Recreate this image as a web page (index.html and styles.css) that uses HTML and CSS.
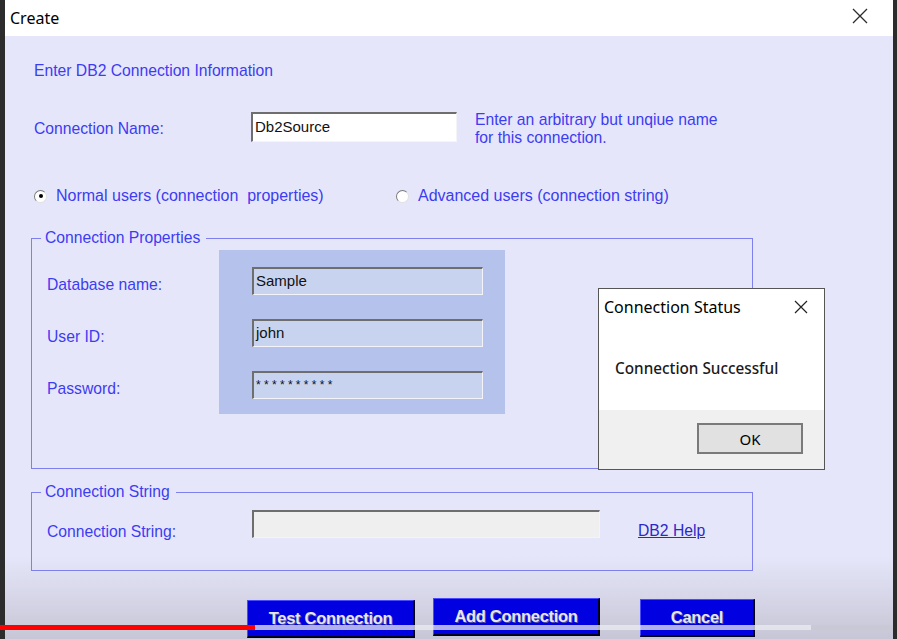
FILE: index.html
```html
<!DOCTYPE html>
<html lang="en">
<head>
    <meta charset="UTF-8">
    <title>Create</title>
    <link rel="stylesheet" href="styles.css">
</head>
<body>
    <div class="screen">
        <div class="window">
            <div class="titlebar">
                <span class="title">Create</span>
                <svg class="close" width="16" height="16" viewBox="0 0 16 16">
                    <path d="M1 1 L15 15 M15 1 L1 15" stroke="#2b2b2b" stroke-width="1.3" fill="none"/>
                </svg>
            </div>

            <div class="content">
                <p class="heading">Enter DB2 Connection Information</p>

                <div class="name-row">
                    <span class="name-label">Connection Name:</span>
                    <div class="field field-white">Db2Source</div>
                    <p class="hint">Enter an arbitrary but unqiue name<br>for this connection.</p>
                </div>

                <div class="radios">
                    <label class="radio radio-first"><span class="dot checked"></span>Normal users (connection&nbsp; properties)</label>
                    <label class="radio"><span class="dot"></span>Advanced users (connection string)</label>
                </div>

                <fieldset class="group group-props">
                    <legend>Connection Properties</legend>
                    <div class="props">
                        <div class="prop-labels">
                            <span>Database name:</span>
                            <span>User ID:</span>
                            <span>Password:</span>
                        </div>
                        <div class="prop-panel">
                            <div class="field field-blue">Sample</div>
                            <div class="field field-blue">john</div>
                            <div class="field field-blue field-pass">**********</div>
                        </div>
                    </div>
                </fieldset>

                <fieldset class="group group-string">
                    <legend>Connection String</legend>
                    <div class="string-row">
                        <span class="string-label">Connection String:</span>
                        <div class="field field-gray"></div>
                        <a class="help" href="#">DB2 Help</a>
                    </div>
                </fieldset>

                <div class="actions">
                    <button class="btn btn-test">Test Connection</button>
                    <button class="btn btn-add">Add Connection</button>
                    <button class="btn btn-cancel">Cancel</button>
                </div>
            </div>
        </div>

        <!-- message box sitting over the form -->
        <div class="msgbox">
            <div class="msg-main">
                <div class="msg-head">
                    <span class="msg-title">Connection Status</span>
                    <svg class="msg-close" width="14" height="14" viewBox="0 0 14 14">
                        <path d="M1 1 L13 13 M13 1 L1 13" stroke="#222" stroke-width="1.2" fill="none"/>
                    </svg>
                </div>
                <p class="msg-text">Connection Successful</p>
            </div>
            <div class="msg-foot">
                <button class="ok-btn">OK</button>
            </div>
        </div>

        <!-- video progress bar -->
        <div class="progress">
            <span class="played"></span>
            <span class="loaded"></span>
            <span class="rest"></span>
        </div>
    </div>
</body>
</html>
```

FILE: styles.css
```css
body {
    margin: 0;
    padding: 0;
    background: #2a2a2a;
}

.screen {
    position: relative;
    width: 897px;
    height: 639px;
    overflow: hidden;
    background: #2c2c2c;
    display: flex;
}

.window {
    margin-left: 5px;
    width: 888px;
    height: 639px;
    display: flex;
    flex-direction: column;
}

.titlebar {
    height: 36px;
    flex-shrink: 0;
    background: #fff;
    display: flex;
    align-items: center;
    justify-content: space-between;
    padding: 0 25px 0 5px;
}

.title {
    font-family: "Noto Sans", sans-serif;
    font-size: 16px;
    color: #000;
}

.close {
    margin-top: -4px;
}

.content {
    flex: 1;
    padding-left: 26px;
    background: linear-gradient(to bottom, #e6e6fa 0, #e6e6fa 520px, #c6c6d6 100%);
    font-family: "Liberation Sans", Arial, sans-serif;
    font-size: 15.7px;
    color: #3c3cf2;
}

.heading {
    margin: 26px 0 0 3px;
    line-height: 18px;
}

/* connection name */
.name-row {
    display: flex;
    align-items: flex-start;
    margin-top: 32px;
}

.name-label {
    width: 217px;
    margin-left: 3px;
    padding-top: 8px;
    line-height: 18px;
}

.field {
    box-sizing: border-box;
    border-top: 2px solid #6e6e6e;
    border-left: 2px solid #6e6e6e;
    border-right: 1px solid #f4f4f8;
    border-bottom: 1px solid #f4f4f8;
    font-family: "Liberation Sans", Arial, sans-serif;
    font-size: 15px;
    color: #111;
    padding: 3px 0 0 2px;
}

.field-white {
    width: 206px;
    height: 30px;
    background: #fff;
    padding-top: 4px;
}

.hint {
    margin: -1px 0 0 18px;
    line-height: 18px;
}

/* radios */
.radios {
    display: flex;
    margin-top: 40px;
    line-height: 18px;
    font-size: 16px;
}

.radio {
    display: flex;
    align-items: center;
}

.radio-first {
    width: 362px;
    margin-left: 3px;
}

.dot {
    box-sizing: border-box;
    width: 13px;
    height: 13px;
    border-radius: 50%;
    border: 1px solid;
    border-color: #7a7a7a #e0e0e0 #e0e0e0 #7a7a7a;
    background: #fff;
    margin-right: 9px;
    display: flex;
    align-items: center;
    justify-content: center;
}

.dot.checked::after {
    content: "";
    width: 4px;
    height: 4px;
    border-radius: 50%;
    background: #000;
}

/* group boxes */
.group {
    box-sizing: border-box;
    width: 722px;
    margin: 0;
    border: 1px solid #7f7ff0;
    padding: 0 0 0 9px;
}

.group legend {
    padding: 0 6px 0 4px;
    line-height: 18px;
}

.group-props {
    margin-top: 24px;
    padding-top: 3px;
    padding-bottom: 54px;
}

.props {
    display: flex;
}

.prop-labels {
    width: 172px;
    padding: 21px 0 0 6px;
    display: flex;
    flex-direction: column;
    gap: 24px;
}

.prop-labels span {
    height: 28px;
    display: flex;
    align-items: center;
}

.prop-panel {
    width: 286px;
    box-sizing: border-box;
    background: #b5c2eb;
    padding: 17px 0 15px 33px;
    display: flex;
    flex-direction: column;
    gap: 24px;
}

.field-blue {
    width: 231px;
    height: 28px;
    background: #c8d4ef;
}

.field-pass {
    font-size: 12px;
    padding-top: 5px;
    letter-spacing: 3.3px;
}

.group-string {
    margin-top: 14px;
    padding-top: 9px;
    padding-bottom: 29px;
}

.string-row {
    display: flex;
    align-items: flex-start;
}

.string-label {
    width: 205px;
    padding: 13px 0 0 6px;
    line-height: 18px;
}

.field-gray {
    width: 348px;
    height: 28px;
    background: #efefef;
}

.help {
    margin: 12px 0 0 38px;
    line-height: 18px;
    color: #2a2ac8;
    text-decoration: underline;
}

/* buttons */
.actions {
    display: flex;
    align-items: flex-start;
    margin: 27px 0 0 216px;
}

.btn {
    box-sizing: border-box;
    height: 38px;
    background: #0000e0;
    border: 1px solid #4a4aff;
    border-right: 2px solid #000018;
    border-bottom: 2px solid #000018;
    color: #e6e6f2;
    font-family: "Liberation Sans", Arial, sans-serif;
    font-weight: bold;
    font-size: 16.5px;
    letter-spacing: -0.3px;
    padding: 0;
    text-shadow: 1px 1px 0 #5050a0;
}

.btn-test {
    width: 168px;
    margin-top: 2px;
}

.btn-add {
    width: 167px;
    margin-left: 18px;
}

.btn-cancel {
    width: 115px;
    margin-left: 40px;
    margin-top: 1px;
}

/* message box */
.msgbox {
    position: absolute;
    left: 598px;
    top: 288px;
    width: 227px;
    height: 182px;
    box-sizing: border-box;
    border: 1px solid #555;
    background: #fff;
    display: flex;
    flex-direction: column;
    font-family: "Noto Sans", sans-serif;
}

.msg-main {
    height: 121px;
}

.msg-head {
    display: flex;
    justify-content: space-between;
    align-items: center;
    padding: 8px 16px 0 5px;
    height: 20px;
}

.msg-title {
    font-size: 16px;
    line-height: 20px;
    color: #000;
}

.msg-text {
    margin: 41px 0 0 16px;
    font-size: 15.3px;
    line-height: 20px;
    color: #1a1a1a;
    font-weight: 500;
}

.msg-foot {
    flex: 1;
    background: #f0f0f0;
    display: flex;
    justify-content: flex-end;
    align-items: flex-start;
    padding: 13px 21px 0 0;
}

.ok-btn {
    width: 106px;
    height: 31px;
    box-sizing: border-box;
    background: #e1e1e1;
    border: 2px solid #7a7a7a;
    font-family: "Noto Sans", sans-serif;
    font-size: 15px;
    color: #000;
    padding: 0;
}

/* progress bar overlay */
.progress {
    position: absolute;
    left: 0;
    top: 625px;
    width: 893px;
    height: 5px;
    display: flex;
}

.played {
    width: 255px;
    background: #ff0000;
}

.loaded {
    width: 556px;
    background: rgba(235, 235, 240, 0.75);
}

.rest {
    flex: 1;
    background: rgba(200, 200, 210, 0.5);
}
```
